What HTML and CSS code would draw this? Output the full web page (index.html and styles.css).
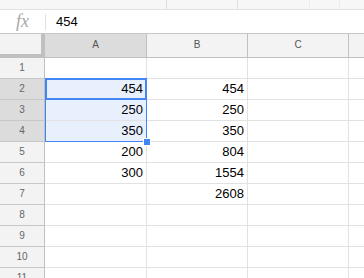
FILE: index.html
```html
<!DOCTYPE html>
<html>
<head>
<meta charset="utf-8">
<link rel="stylesheet" href="styles.css">
</head>
<body>
<div class="toolbar">
  <span class="tb-seg w166"></span>
  <span class="tb-seg w71"></span>
  <span class="tb-seg w72 faint"></span>
  <span class="tb-seg w30 faint"></span>
  <span class="tb-rest"></span>
</div>
<div class="formula">
  <span class="fx">fx</span>
  <span class="fsep"></span>
  <span class="fval">454</span>
</div>
<div class="sheet">
  <div class="corner"></div>
  <div class="colh sel">A</div>
  <div class="colh">B</div>
  <div class="colh">C</div>
  <div class="colh last"></div>

  <div class="rowh">1</div><div class="cell"></div><div class="cell"></div><div class="cell"></div><div class="cell last"></div>
  <div class="rowh sel">2</div><div class="cell in">454</div><div class="cell">454</div><div class="cell"></div><div class="cell last"></div>
  <div class="rowh sel">3</div><div class="cell in">250</div><div class="cell">250</div><div class="cell"></div><div class="cell last"></div>
  <div class="rowh sel">4</div><div class="cell in">350</div><div class="cell">350</div><div class="cell"></div><div class="cell last"></div>
  <div class="rowh">5</div><div class="cell">200</div><div class="cell">804</div><div class="cell"></div><div class="cell last"></div>
  <div class="rowh">6</div><div class="cell">300</div><div class="cell">1554</div><div class="cell"></div><div class="cell last"></div>
  <div class="rowh">7</div><div class="cell"></div><div class="cell">2608</div><div class="cell"></div><div class="cell last"></div>
  <div class="rowh">8</div><div class="cell"></div><div class="cell"></div><div class="cell"></div><div class="cell last"></div>
  <div class="rowh">9</div><div class="cell"></div><div class="cell"></div><div class="cell"></div><div class="cell last"></div>
  <div class="rowh">10</div><div class="cell"></div><div class="cell"></div><div class="cell"></div><div class="cell last"></div>
  <div class="rowh">11</div><div class="cell"></div><div class="cell"></div><div class="cell"></div><div class="cell last"></div>

  <div class="range"><span class="handle"></span></div>
  <div class="active"></div>
</div>
</body>
</html>
```

FILE: styles.css
```css
html, body {
  margin: 0;
  padding: 0;
  width: 364px;
  height: 278px;
  overflow: hidden;
  background: #fff;
  font-family: "Liberation Sans", Arial, sans-serif;
}

.toolbar {
  display: flex;
  height: 9px;
  background: #f7f7f7;
  border-bottom: 1px solid #e2e2e2;
}
.tb-seg {
  height: 9px;
  border-right: 1px solid #e0e0e0;
  box-sizing: border-box;
}
.tb-seg.faint { border-right-color: #ececec; }
.w166 { width: 167px; }
.w71 { width: 71px; }
.w72 { width: 72px; }
.w30 { width: 30px; }
.tb-rest { flex: 1; }

.formula {
  display: flex;
  align-items: center;
  height: 23px;
  border-bottom: 1px solid #c7c7c7;
}
.fx {
  width: 45px;
  text-align: center;
  font-family: "Liberation Serif", "Times New Roman", serif;
  font-style: italic;
  font-size: 18px;
  color: #a8a8a8;
  line-height: 23px;
}
.fsep {
  width: 1px;
  height: 16px;
  background: #e0e0e0;
}
.fval {
  margin-left: 10px;
  font-size: 13px;
  color: #000;
}

.sheet {
  position: relative;
  display: grid;
  grid-template-columns: 45px 102px 101px 101px 1fr;
  grid-template-rows: 24px repeat(11, 21px);
}

.corner {
  background: #f3f3f3;
  border-right: 4px solid #c0c0c0;
  border-bottom: 4px solid #c0c0c0;
  box-sizing: border-box;
  height: 24px;
}
.colh {
  background: #f3f3f3;
  border-right: 1px solid #c0c0c0;
  border-bottom: 1px solid #c0c0c0;
  font-size: 10px;
  color: #555;
  text-align: center;
  line-height: 22px;
  padding-bottom: 1px;
}
.colh.sel { background: #dcdcdc; }
.colh.last { border-right: 0; }

.rowh {
  background: #f3f3f3;
  border-right: 1px solid #c0c0c0;
  border-bottom: 1px solid #c7c7c7;
  font-size: 10px;
  color: #666;
  text-align: center;
  line-height: 20px;
}
.rowh.sel { background: #dcdcdc; }

.cell {
  border-right: 1px solid #e2e2e2;
  border-bottom: 1px solid #e2e2e2;
  font-size: 13px;
  color: #000;
  text-align: right;
  line-height: 20px;
  padding-right: 3px;
}
.cell.in { background: #e8f0fe; }
.cell.last { border-right: 0; }

.range {
  position: absolute;
  grid-column: 2 / 3;
  grid-row: 3 / 6;
  top: -1px;
  left: 0;
  right: 0;
  bottom: 0;
  border: 1px solid #4285f4;
  box-sizing: border-box;
}
.handle {
  position: absolute;
  right: -4px;
  bottom: -4px;
  width: 6px;
  height: 6px;
  background: #4285f4;
  outline: 1px solid #fff;
}
.active {
  position: absolute;
  grid-column: 2 / 3;
  grid-row: 3 / 4;
  top: -1px;
  left: 0;
  right: 0;
  bottom: 0;
  border: 2px solid #4285f4;
  box-sizing: border-box;
}
```
